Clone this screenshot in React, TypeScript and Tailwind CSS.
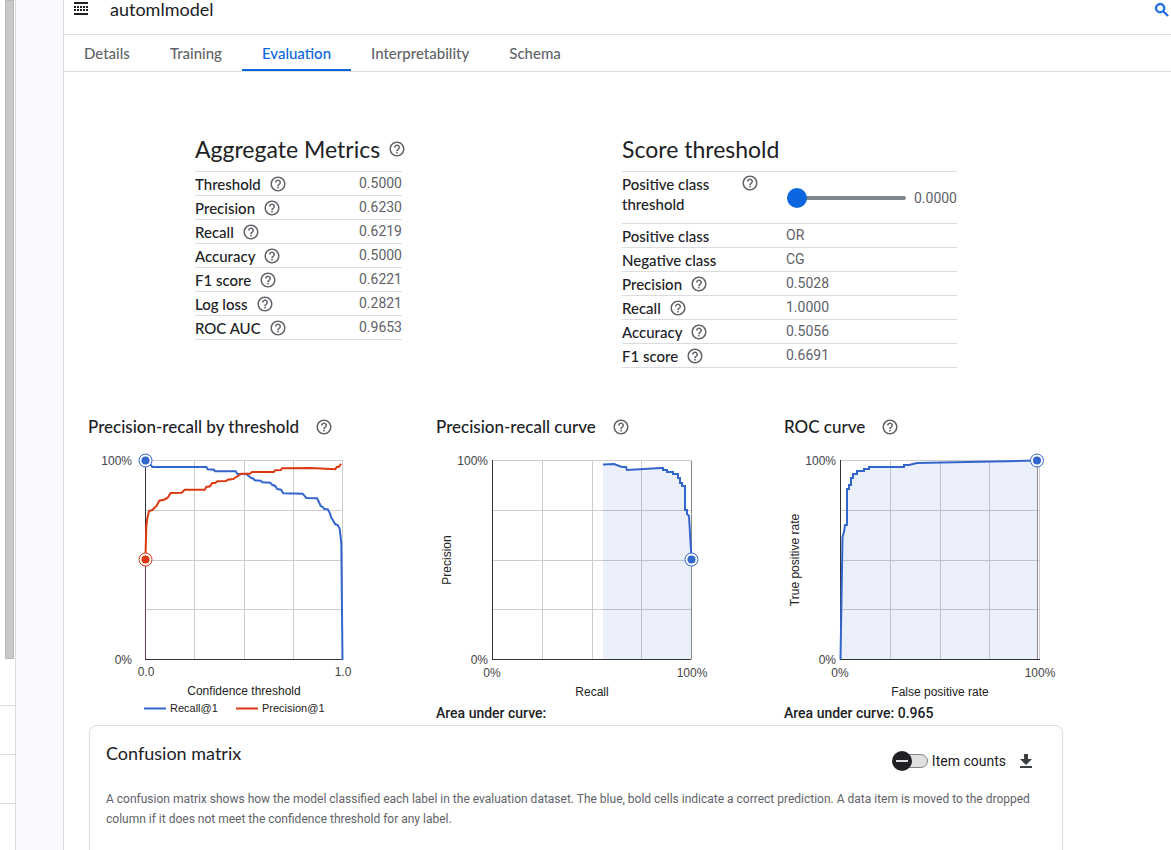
import React from "react";

const font = "font-['Roboto','Liberation_Sans',sans-serif]";
const display = "font-['Lato','Open_Sans',sans-serif]";

function Help() {
  return (
    <svg viewBox="0 0 24 24" className="block size-[18px] shrink-0 fill-[#5f6368]" role="img" aria-label="Help">
      <path d="M11 18h2v-2h-2v2zm1-16C6.48 2 2 6.48 2 12s4.480 10 10 10 10-4.480 10-10S17.520 2 12 2zm0 18c-4.410 0-8-3.590-8-8s3.590-8 8-8 8 3.590 8 8-3.590 8-8 8zm0-14c-2.210 0-4 1.790-4 4h2c0-1.100.900-2 2-2s2 .900 2 2c0 2-3 1.750-3 5h2c0-2.250 3-2.500 3-5 0-2.210-1.790-4-4-4z" />
    </svg>
  );
}

const tabs = ["Details", "Training", "Evaluation", "Interpretability", "Schema"];
const aggregate = [
  ["Threshold", "0.5000"],
  ["Precision", "0.6230"],
  ["Recall", "0.6219"],
  ["Accuracy", "0.5000"],
  ["F1 score", "0.6221"],
  ["Log loss", "0.2821"],
  ["ROC AUC", "0.9653"],
];
const score: [string, string, boolean][] = [
  ["Positive class", "OR", false],
  ["Negative class", "CG", false],
  ["Precision", "0.5028", true],
  ["Recall", "1.0000", true],
  ["Accuracy", "0.5056", true],
  ["F1 score", "0.6691", true],
];

const recallLine =
  "57,10.5 60.3,14.3 63,15 64.3,17 118.3,17 119.7,19.3 126,19.7 127,21.3 147.7,21.3 149.3,23.7 158.7,24 160.3,25.7 162.7,27.7 165.3,28.7 166.7,30.3 172.7,30.7 174.3,32.3 182.3,32.7 184.3,35 187,35.7 189.3,39 193,39.7 195.3,43.3 214.7,43.7 218.3,48 229,48.3 231,52.3 232.7,56 234.7,57 236.3,59 239.7,59.3 242,63.3 243.3,67.7 244.7,69.7 247.3,74.3 249.7,75 251.7,78.7 253.3,93.3 254.5,210";
const precisionLine =
  "57.5,109.5 57.7,98 58.3,76.7 59.3,68.3 61,61 64.3,60 68.7,55.7 71.3,50.7 76,49.7 79.7,47.7 82.7,43 93.7,42.7 96.7,39.7 116.7,39.7 118.3,37 122,36.3 124.3,33 127.3,33 129.3,31.3 138,31 139.7,29.7 145.3,29 148,27 150,26 153.3,23.7 162,23.7 164,22 185.7,22 187,20.3 192.7,20 194,18.3 222,18 247.3,19.3 248.7,17 251,16.7 253,13.7";

function Grid({ x, w }: { x: number; w: number }) {
  return (
    <g stroke="#ccc" shapeRendering="crispEdges">
      {[106.5, 156.5, 205.5].map((v) => (
        <line key={v} x1={v} x2={v} y1="10.5" y2="209.5" />
      ))}
      {[10.5, 60.5, 110.5, 159.5].map((y) => (
        <line key={y} x1={x} x2={x + w + 1} y1={y} y2={y} />
      ))}
      <line x1={x + w + 0.5} x2={x + w + 0.5} y1="10.5" y2="209.5" />
    </g>
  );
}

function Point({ x, y, color }: { x: number; y: number; color: string }) {
  return (
    <g>
      <circle cx={x} cy={y} r="6.500" fill="#fff" stroke={color} />
      <circle cx={x} cy={y} r="4" fill={color} />
    </g>
  );
}

function ThresholdChart() {
  return (
    <svg width="280" height="275" className="block" fontFamily="Liberation Sans, sans-serif" fontSize="12" fill="#222">
      <Grid x={57} w={197} />
      <path d="M57.500 10V209.500H255" fill="none" stroke="#333" shapeRendering="crispEdges" />
      <path d="M57.500 110V209" stroke="#7a3b46" shapeRendering="crispEdges" />
      <g fill="#444">
        <text x="44" y="15" textAnchor="end">100%</text>
        <text x="44" y="214" textAnchor="end">0%</text>
        <text x="58" y="226" textAnchor="middle">0.0</text>
        <text x="255" y="226" textAnchor="middle">1.0</text>
      </g>
      <text x="156" y="245" textAnchor="middle">Confidence threshold</text>
      <polyline points={recallLine} fill="none" stroke="#36c" strokeWidth="2" />
      <polyline points={precisionLine} fill="none" stroke="#dc3912" strokeWidth="2" />
      <Point x={57.5} y={10.5} color="#36c" />
      <Point x={57.5} y={109.5} color="#dc3912" />
      <path d="M56 258.500h22" stroke="#36c" strokeWidth="2" />
      <text x="82" y="262" fontSize="11">Recall@1</text>
      <path d="M148 258.500h22" stroke="#dc3912" strokeWidth="2" />
      <text x="174" y="262" fontSize="11">Precision@1</text>
    </svg>
  );
}

function AreaChart({ roc }: { roc?: boolean }) {
  const curve = roc
    ? "M56.500 209.500L58.500 87L60 82L61 75H63V39H65V35H67V28H69V24H73V21H80V19H85V17H120V15H125L133 13L253 10.500"
    : "M167 14.500L178 14L186 17H190L191 20L225 18H227V20H231V22H237V24H242V28H244V33H246V36H249V60H251V64L253 66L255.500 109.500";
  const fill = roc ? curve + "V209.500Z" : curve + "V209.500H167Z";
  return (
    <svg width="280" height="250" className="block" fontFamily="Liberation Sans, sans-serif" fontSize="12" fill="#222">
      <Grid x={56} w={199} />
      <path d={fill} fill="#36c" fillOpacity="0.1" />
      <path d={roc ? "M56.500 10V209.500H256" : "M56.500 10V209.500H255"} fill="none" stroke="#333" shapeRendering="crispEdges" />
      <path d={roc ? "M253.500 11V209" : "M255.500 11V209"} stroke="#888" shapeRendering="crispEdges" />
      <path d={curve} fill="none" stroke="#36c" strokeWidth="2" />
      <Point x={roc ? 253 : 255.5} y={roc ? 10.5 : 109.5} color="#36c" />
      <g fill="#444">
        <text x="52" y="15" textAnchor="end">100%</text>
        <text x="52" y="214" textAnchor="end">0%</text>
        <text x="56" y="227" textAnchor="middle">0%</text>
        <text x="256" y="227" textAnchor="middle">100%</text>
      </g>
      <text x="156" y="246" textAnchor="middle">{roc ? "False positive rate" : "Recall"}</text>
      <text transform="translate(15 110) rotate(-90)" textAnchor="middle">{roc ? "True positive rate" : "Precision"}</text>
    </svg>
  );
}

function ChartCard({ title, area, children }: { title: string; area?: string; children: React.ReactNode }) {
  return (
    <section className="min-w-0">
      <h3 className={`flex h-6 items-center gap-4 text-[17px] font-medium whitespace-nowrap ${display}`}>{title}<Help /></h3>
      <div className="mt-[11px]">{children}</div>
      {area && <p className="mt-[3px] text-sm leading-5 font-medium">{area}</p>}
    </section>
  );
}

export default function App() {
  return (
    <div className={`flex h-screen overflow-hidden bg-white text-[#202124] ${font}`}>
      <aside className="w-4 shrink-0 border-r border-[#dadce0]">
        <div className="ml-[5px] h-[659px] w-[9px] border border-[#b8b8b8] bg-[#c9c9c9]" />
        <div className="mt-[46px] h-[50px] border-y border-[#dadce0]" />
        <div className="h-[49px] border-b border-[#dadce0]" />
      </aside>
      <div className="w-12 shrink-0 border-r border-[#dadce0] bg-[#f8fafd]" />
      <main className="min-w-0 flex-1">
        <header className="flex h-[35px] items-start justify-between border-b border-[#dadce0] pl-[10px]">
          <div className="flex items-start gap-[21px]">
            <svg width="15" height="18" viewBox="0 0 15 18" fill="#202124" aria-hidden="true">
              <path d="M0 2h14v2H0zM0 13h14v2H0zM0 6h2v2H0zM3 6h2v2H3zM6 6h2v2H6zM9 6h2v2H9zM12 6h2v2h-2zM0 9h2v2H0zM3 9h2v2H3zM6 9h2v2H6zM9 9h2v2H9zM12 9h2v2h-2z" />
            </svg>
            <h1 className={`text-lg leading-[18px] ${display}`}>automlmodel</h1>
          </div>
          <button aria-label="Search" className="pt-px">
            <svg width="18" height="18" viewBox="0 0 24 24" fill="#0b66e0" stroke="#0b66e0"><path d="M15.500 14h-.79l-.28-.27A6.471 6.471 0 0 0 16 9.500 6.500 6.500 0 1 0 9.500 16c1.610 0 3.090-.59 4.230-1.570l.27.28v.79l5 4.990L20.490 19l-4.990-5zm-6 0C7.010 14 5 11.990 5 9.500S7.010 5 9.500 5 14 7.010 14 9.500 11.990 14 9.500 14z" /></svg>
          </button>
        </header>
        <nav className={`flex h-[37px] border-b border-[#dadce0] text-[15px] font-medium ${display}`}>
          {tabs.map((t) => (
            <a key={t} href={"#" + t.toLowerCase()} className={t === "Evaluation" ? "border-b-2 border-[#0b66e0] px-5 leading-9 text-[#0b66e0]" : "px-5 leading-9 text-[#5f6368]"}>{t}</a>
          ))}
        </nav>
        <div className="max-w-[1023px] pt-16">
          <div className="flex justify-between pr-[130px] pl-[131px]">
            <section className="w-[207px]">
              <h2 className={`mb-[9px] flex h-[26px] items-center gap-2 text-[23px] whitespace-nowrap ${display}`}>Aggregate Metrics<Help /></h2>
              <table className="w-full border-t border-[#dadce0] text-sm leading-5">
                <tbody>
                  {aggregate.map(([k, v]) => (
                    <tr key={k} className="h-6 border-b border-[#dadce0]">
                      <th scope="row" className={`p-0 text-left text-[15px] leading-5 font-medium ${display}`}><span className="flex items-center gap-2">{k}<Help /></span></th>
                      <td className="p-0 pb-0.5 text-right text-[#5f6368]">{v}</td>
                    </tr>
                  ))}
                </tbody>
              </table>
            </section>
            <section className="w-[335px]">
              <h2 className={`mb-[9px] flex h-[26px] items-center text-[23px] ${display}`}>Score threshold</h2>
              <table className="w-full border-t border-[#dadce0] text-sm leading-5">
                <tbody>
                  <tr className="h-[52px] border-b border-[#dadce0]">
                    <th scope="row" className={`w-[164px] p-0 pt-0.5 text-left align-top text-[15px] leading-5 font-medium ${display}`}>
                      <span className="flex items-start"><label htmlFor="threshold" className="w-[119px] pr-4">Positive class threshold</label><Help /></span>
                    </th>
                    <td className="p-0 text-[#5f6368]">
                      <span className="flex items-center justify-end gap-2">
                        <input id="threshold" type="range" min="0" max="1" step="0.01" defaultValue="0" className="h-5 w-[119px] appearance-none bg-transparent [&::-webkit-slider-runnable-track]:h-1 [&::-webkit-slider-runnable-track]:rounded-full [&::-webkit-slider-runnable-track]:bg-[#80868b] [&::-webkit-slider-thumb]:-mt-2 [&::-webkit-slider-thumb]:size-5 [&::-webkit-slider-thumb]:appearance-none [&::-webkit-slider-thumb]:rounded-full [&::-webkit-slider-thumb]:bg-[#0b66e0]" />
                        0.0000
                      </span>
                    </td>
                  </tr>
                  {score.map(([k, v, help]) => (
                    <tr key={k} className="h-6 border-b border-[#dadce0]">
                      <th scope="row" className={`p-0 text-left text-[15px] leading-5 font-medium ${display}`}><span className="flex items-center gap-2">{k}{help && <Help />}</span></th>
                      <td className="p-0 pb-0.5 text-[#5f6368]">{v}</td>
                    </tr>
                  ))}
                </tbody>
              </table>
            </section>
          </div>
          <div className="mt-[47px] grid grid-cols-[348px_348px_280px] pl-6">
            <ChartCard title="Precision-recall by threshold"><ThresholdChart /></ChartCard>
            <ChartCard title="Precision-recall curve" area="Area under curve:"><AreaChart /></ChartCard>
            <ChartCard title="ROC curve" area="Area under curve: 0.965"><AreaChart roc /></ChartCard>
          </div>
          <section className="mr-6 ml-[25px] min-h-60 rounded-lg border border-[#dadce0] px-4 pt-[15px]">
            <div className="flex justify-between">
              <h2 className={`text-lg leading-6 ${display}`}>Confusion matrix</h2>
              <div className="flex h-10 items-center pr-3">
                <label className="flex items-center gap-1 text-sm">
                  <input type="checkbox" role="switch" className="peer sr-only" />
                  <svg width="36" height="24" viewBox="0 0 36 24" aria-hidden="true"><rect x="7.500" y="5.500" width="28" height="13" rx="6.500" fill="#e0e0e0" stroke="#80868b" /><circle cx="10" cy="12" r="10" fill="#202124" /><path d="M4 12h12" stroke="#e0e0e0" strokeWidth="2" /></svg>
                  Item counts
                </label>
                <button aria-label="Download" className="ml-3"><svg width="16" height="16" viewBox="0 0 16 16" fill="#3c4043"><path d="M6 1h4v5h4l-6 6-6-6h4zM2 13h12v2H2z" /></svg></button>
              </div>
            </div>
            <p className="mt-2 text-xs leading-5 text-[#5f6368]">A confusion matrix shows how the model classified each label in the evaluation dataset. The blue, bold cells indicate a correct prediction. A data item is moved to the dropped column if it does not meet the confidence threshold for any label.</p>
          </section>
        </div>
      </main>
    </div>
  );
}
